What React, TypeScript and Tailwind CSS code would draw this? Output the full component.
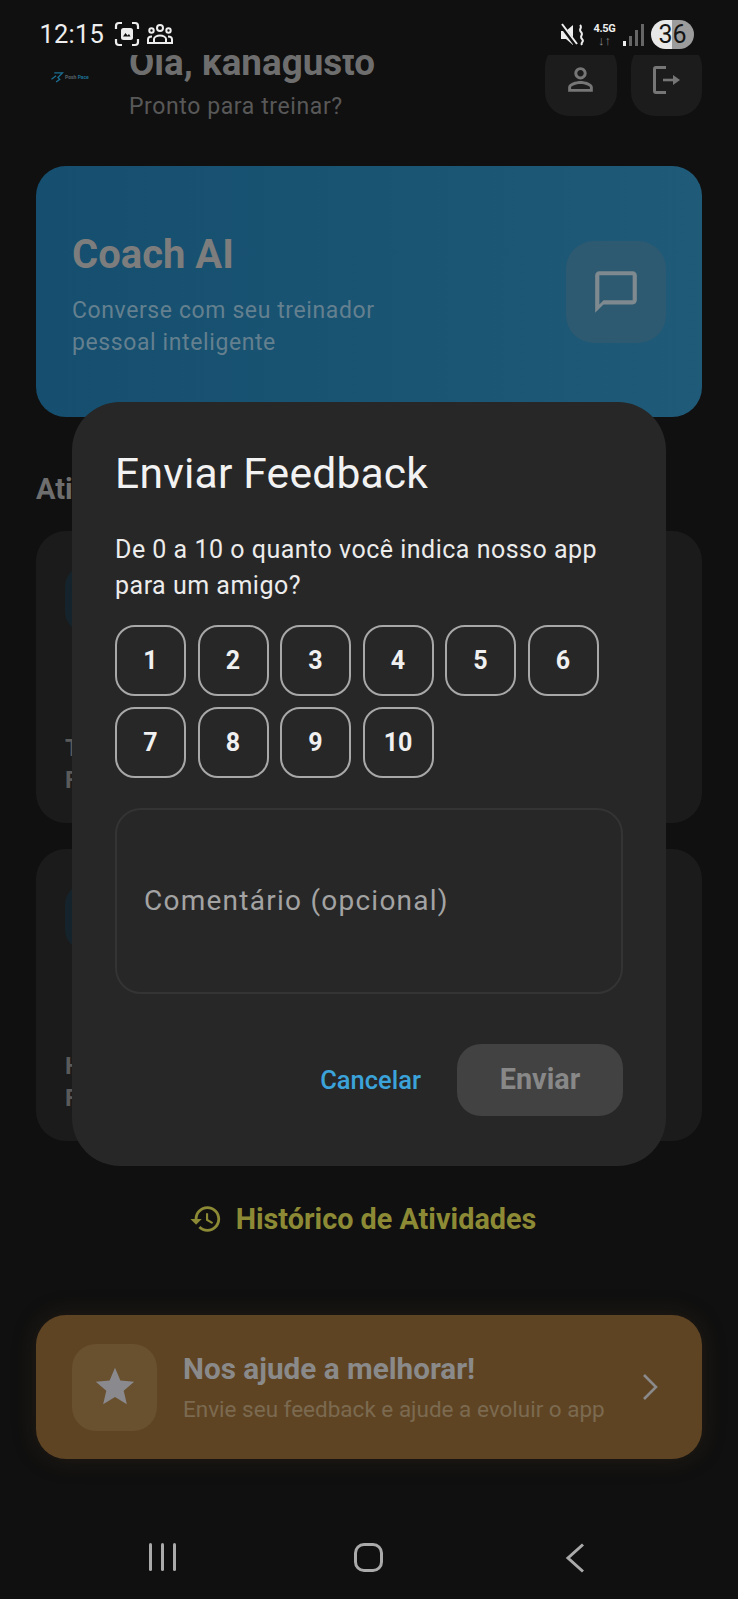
import type { ReactNode } from "react";

const font = { fontFamily: "Roboto, sans-serif" };

function Icon({ d, className }: { d: string; className: string }) {
  return (
    <svg viewBox="0 0 24 24" fill="currentColor" className={className}>
      <path d={d} />
    </svg>
  );
}

function StatusBar() {
  return (
    <div className="relative z-10 flex h-[55px] items-start justify-between bg-[#101010] pl-[39.500px] pr-[44px] pt-[20px] text-[#eeeeee]">
      <div className="flex items-center">
        <span className="text-[25.500px] leading-[28px] tracking-[0.2px]">12:15</span>
        {/* screenshot icon */}
        <svg viewBox="0 0 26 26" className="ml-[10px] h-[26px] w-[26px]" fill="none" stroke="currentColor" strokeWidth="2.2">
          <path d="M2 8V5a3 3 0 0 1 3-3h3M18 2h3a3 3 0 0 1 3 3v3M24 18v3a3 3 0 0 1-3 3h-3M8 24H5a3 3 0 0 1-3-3v-3" />
          <rect x="7" y="7" width="12" height="12" rx="2.5" fill="currentColor" stroke="none" />
          <path d="M9 15.500l2.500-3.500 2 2.500 1.500-1.500 1.500 2.500z" fill="#101010" stroke="none" />
        </svg>
        {/* group icon */}
        <svg viewBox="0 0 26 22" className="ml-[7px] h-[22px] w-[26px]" fill="none" stroke="currentColor" strokeWidth="2">
          <circle cx="13" cy="5" r="3" />
          <circle cx="4.5" cy="7.5" r="2.2" />
          <circle cx="21.5" cy="7.5" r="2.2" />
          <path d="M1 19v-2.5c0-2 2-3 4-3M25 19v-2.5c0-2-2-3-4-3M7 19v-3c0-2 3-3.5 6-3.5s6 1.500 6 3.500v3" />
          <path d="M0 20h26" />
        </svg>
      </div>
      <div className="flex items-center">
        {/* muted speaker with vibrate wave */}
        <svg viewBox="0 0 24 24" className="h-[24px] w-[24px]" fill="none">
          <path d="M1 8h5l7-6v20l-7-6H1z" fill="currentColor" />
          <path d="M1 2l15 20" stroke="#101010" strokeWidth="4" />
          <path d="M2 1l15 20" stroke="currentColor" strokeWidth="2" />
          <path d="M20 2c3 3-2 4 1 7s-2 4 1 7-2 3 0 6" stroke="currentColor" strokeWidth="2" />
        </svg>
        <div className="ml-[9px] flex w-[23px] flex-col items-center">
          <span className="text-[11px] font-bold leading-[12px] tracking-[-0.3px]">4.5G</span>
          <span className="text-[13px] font-bold leading-[11px] text-[#888888]">↓↑</span>
        </div>
        {/* signal bars */}
        <div className="ml-[7px] flex h-[22px] items-end gap-[3px]">
          <div className="h-[5px] w-[3px] bg-[#eeeeee]" />
          <div className="h-[10px] w-[3px] bg-[#666666]" />
          <div className="h-[16px] w-[3px] bg-[#666666]" />
          <div className="h-[22px] w-[3px] bg-[#666666]" />
        </div>
        <div className="relative ml-[7px] flex h-[29px] w-[43px] items-center justify-center overflow-hidden rounded-full bg-[linear-gradient(90deg,#e8e8e8_0%,#e8e8e8_48%,#9c9c9c_48%,#9c9c9c_100%)] text-[25px] leading-none text-[#151515]">
          36
        </div>
      </div>
    </div>
  );
}

function Header() {
  return (
    <div className="h-[95px] overflow-hidden">
      <div className="-mt-[12px] flex items-start pl-[36px] pr-[36px]">
        <div className="mt-[28px] flex h-[12px] w-[93px] items-center pl-[14px]">
          <svg viewBox="0 0 14 12" className="h-[11px] w-[14px]" fill="none" stroke="#1b6f93" strokeWidth="1.4">
            <path d="M4 1h9L8 6l2 2-4 3M1 8l5-4" />
          </svg>
          <span className="ml-[1px] text-[5px] font-bold leading-none text-[#5a6368]">
            Posh <span className="text-[#1b6f93]">Pace</span>
          </span>
        </div>
        <div className="flex-1">
          <p className="text-[36.800px] font-bold leading-[40px] text-[#6e6e6e]">Olá, kanagusto</p>
          <p className="mt-[9px] text-[23px] leading-[30px] tracking-[0.6px] text-[#585858]">Pronto para treinar?</p>
        </div>
        <div className="flex gap-[14px]">
          <HeaderButton>
            <Icon
              className="h-[37px] w-[37px]"
              d="M12 5.9c1.160 0 2.100.94 2.100 2.100s-.94 2.100-2.100 2.100S9.900 9.160 9.900 8s.94-2.100 2.100-2.100m0 9c2.970 0 6.100 1.460 6.100 2.100v1.100H5.900V17c0-.64 3.130-2.100 6.100-2.100M12 4C9.790 4 8 5.790 8 8s1.790 4 4 4 4-1.790 4-4-1.790-4-4-4zm0 9c-2.670 0-8 1.340-8 4v3h16v-3c0-2.660-5.330-4-8-4z"
            />
          </HeaderButton>
          <HeaderButton>
            <svg viewBox="0 0 30 30" className="h-[30px] w-[30px]" fill="none" stroke="currentColor" strokeWidth="3">
              <path d="M15 2.500H5a1.500 1.500 0 0 0-1.500 1.500v22A1.500 1.500 0 0 0 5 27.500h10" />
              <path d="M12 15h11" strokeWidth="2.600" />
              <path d="M22 10l7 5-7 5z" fill="currentColor" stroke="none" />
            </svg>
          </HeaderButton>
        </div>
      </div>
    </div>
  );
}

function HeaderButton({ children }: { children: ReactNode }) {
  return (
    <div className="flex h-[73px] w-[71.500px] items-center justify-center rounded-[24px] bg-[#1c1c1c] text-[#767676]">
      {children}
    </div>
  );
}

function ActivityCard({ lines }: { lines: string[] }) {
  return (
    <div className="h-[292px] rounded-[30px] bg-[#1b1b1b] pl-[29px] pt-[34px]">
      <div className="h-[68px] w-[68px] rounded-[22px] bg-[#15242c]" />
      <div className="mt-[99px] text-[24px] font-bold leading-[32px] text-[#5a5a5a]">
        {lines.map((line) => (
          <p key={line}>{line}</p>
        ))}
      </div>
    </div>
  );
}

function FeedbackDialog() {
  const scores = [1, 2, 3, 4, 5, 6, 7, 8, 9, 10];
  return (
    <div className="absolute left-[72px] top-[402px] z-20 flex h-[764px] w-[594px] flex-col rounded-[48px] bg-[#272727] px-[43px] pt-[43px]">
      <h2 className="text-[42.600px] leading-[56px] tracking-[0.2px] text-[#f2f2f2]">Enviar Feedback</h2>
      <p className="mt-[31px] text-[25px] leading-[36px] tracking-[0.5px] text-[#ececec]">
        De 0 a 10 o quanto você indica nosso app para um amigo?
      </p>
      <div className="mt-[21px] flex w-[490px] flex-wrap gap-x-[11.500px] gap-y-[11px]">
        {scores.map((n) => (
          <div
            key={n}
            className="flex h-[71px] w-[71px] items-center justify-center rounded-[20px] border-2 border-[#a8a8a8] text-[25px] font-bold text-[#f0f0f0]"
          >
            {n}
          </div>
        ))}
      </div>
      <div className="mt-[30px] flex h-[186px] w-[508px] items-center rounded-[26px] border-2 border-[#343434] pl-[27px] text-[28px] tracking-[1.250px] text-[#a3a3a3]">
        Comentário (opcional)
      </div>
      <div className="mt-[50px] flex w-[508px] items-center justify-end gap-[36px]">
        <span className="text-[25.500px] font-medium text-[#3ba3da]">Cancelar</span>
        <div className="flex h-[72px] w-[166px] items-center justify-center rounded-[24px] bg-[#424242] text-[28.800px] font-bold text-[#888888]">
          Enviar
        </div>
      </div>
    </div>
  );
}

export default function App() {
  return (
    <div style={font} className="relative h-[1599px] w-[738px] overflow-hidden bg-[#101010]">
      <StatusBar />
      <Header />

      <main className="mt-[16px] px-[36px]">
        <section className="flex h-[251px] items-center justify-between rounded-[30px] bg-[linear-gradient(90deg,#154e6e,#1f5a78)] pl-[36px] pr-[36px]">
          <div className="mt-[8px]">
            <h1 className="text-[40px] font-bold leading-[44px] text-[#7d7d7d]">Coach AI</h1>
            <p className="mt-[18px] w-[340px] text-[23px] leading-[32px] tracking-[0.6px] text-[#64808f]">
              Converse com seu treinador pessoal inteligente
            </p>
          </div>
          <div className="flex h-[102px] w-[100px] items-center justify-center rounded-[28px] bg-[#2e5a71] text-[#7f8a90]">
            <Icon
              className="h-[50px] w-[50px]"
              d="M20 2H4c-1.100 0-2 .9-2 2v18l4-4h14c1.100 0 2-.9 2-2V4c0-1.100-.9-2-2-2zm0 14H6l-2 2V4h16v12z"
            />
          </div>
        </section>

        <h3 className="mt-[54px] text-[29px] font-bold leading-[36px] text-[#6e6e6e]">Atividades</h3>

        <div className="mt-[24px] flex flex-col gap-[26px]">
          <ActivityCard lines={["Treino", "Físico"]} />
          <ActivityCard lines={["Histórico", "Físico"]} />
        </div>

        <div className="mt-[60px] flex items-center justify-center gap-[13px] pr-[13px] text-[#8d8a35]">
          <Icon
            className="h-[34px] w-[34px]"
            d="M13 3c-4.970 0-9 4.030-9 9H1l3.890 3.890.07.14L9 12H6c0-3.870 3.130-7 7-7s7 3.130 7 7-3.130 7-7 7c-1.930 0-3.680-.79-4.940-2.060l-1.420 1.420C8.270 19.990 10.510 21 13 21c4.970 0 9-4.030 9-9s-4.030-9-9-9zm-1 5v5l4.280 2.540.72-1.210-3.500-2.080V8H12z"
          />
          <span className="text-[28.800px] font-bold leading-[36px]">Histórico de Atividades</span>
        </div>

        <section className="mt-[78px] flex h-[144px] items-center rounded-[30px] bg-[#5f4424] pl-[36px] pr-[44px] shadow-[0_0_24px_rgba(95,68,36,0.25)]">
          <div className="flex h-[87px] w-[85px] shrink-0 items-center justify-center rounded-[24px] bg-[#69502f] text-[#8a8a8e]">
            <Icon
              className="h-[46px] w-[46px]"
              d="M12 17.270L18.180 21l-1.640-7.030L22 9.240l-7.190-.61L12 2 9.190 8.630 2 9.240l5.460 4.730L5.820 21z"
            />
          </div>
          <div className="ml-[26px] flex-1">
            <p className="text-[29.700px] font-bold leading-[34px] text-[#8a8a8a]">Nos ajude a melhorar!</p>
            <p className="mt-[9px] text-[22.500px] leading-[28px] text-[#7b6a50]">
              Envie seu feedback e ajude a evoluir o app
            </p>
          </div>
          <svg viewBox="0 0 16 28" className="h-[28px] w-[16px]" fill="none" stroke="#8a8a8a" strokeWidth="2.600">
            <path d="M2 2l12 12L2 26" />
          </svg>
        </section>
      </main>

      <FeedbackDialog />

      {/* system navigation, over everything */}
      <nav className="absolute bottom-0 left-0 right-0 z-30 flex h-[80px] items-start bg-[#101010] pl-[149px] pt-[24px]">
        <div className="flex h-[28px] w-[27px] justify-between">
          <div className="h-full w-[3px] rounded-full bg-[#aaaaaa]" />
          <div className="h-full w-[3px] rounded-full bg-[#aaaaaa]" />
          <div className="h-full w-[3px] rounded-full bg-[#aaaaaa]" />
        </div>
        <div className="ml-[178px] h-[29px] w-[29px] rounded-[10px] border-[3px] border-[#aaaaaa]" />
        <svg viewBox="0 0 20 30" className="ml-[182px] h-[30px] w-[20px]" fill="none" stroke="#aaaaaa" strokeWidth="3">
          <path d="M18 1.500L3 15l15 13.500" />
        </svg>
      </nav>
    </div>
  );
}
